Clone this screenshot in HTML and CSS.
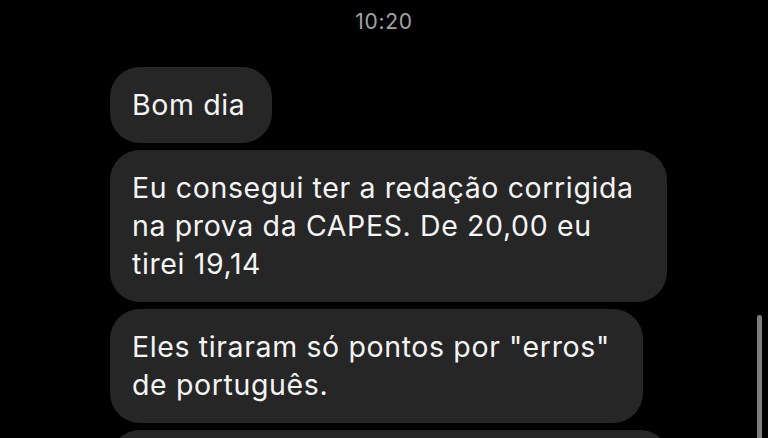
FILE: index.html
```html
<!DOCTYPE html>
<html>

<head>
  <title>Mensagens</title>
  <link rel="stylesheet" href="styles.css">
</head>

<body>
  <div class="chat">
    <div class="hora">10:20</div>
    <div class="lista">
      <div class="balao curto">Bom dia</div>
      <div class="balao">Eu consegui ter a redação corrigida<br>na prova da CAPES. De 20,00 eu<br>tirei 19,14</div>
      <div class="balao">Eles tiraram só pontos por "erros"<br>de português.</div>
      <div class="balao proximo"></div>
    </div>
  </div>
  <div class="scroll"></div>
</body>

</html>
```
FILE: styles.css
```css
* {
  margin: 0;
  padding: 0;
  box-sizing: border-box;
}

body {
  font-family: Inter, "Noto Sans", sans-serif;
  background-color: #000;
  color: #f4f4f4;
  height: 438px;
  overflow: hidden;
}

.chat {
  padding-top: 8px;
}

.hora {
  text-align: center;
  font-size: 21px;
  line-height: 28px;
  letter-spacing: 0.7px;
  color: #a3a3a3;
}

.lista {
  display: flex;
  flex-direction: column;
  align-items: flex-start;
  gap: 7px;
  padding-left: 110px;
  margin-top: 31px;
}

.balao {
  background-color: #262626;
  border-radius: 30px;
  padding: 19px 33px 19px 22px;
  font-size: 28.5px;
  line-height: 38px;
  letter-spacing: 0.62px;
}

.balao.curto {
  padding-right: 27px;
}

.balao.proximo {
  width: 560px;
  height: 80px;
}

/* barra de rolagem */
.scroll {
  position: absolute;
  right: 6px;
  top: 315px;
  width: 5px;
  height: 140px;
  border-radius: 3px;
  background-color: #7d7d7d;
}
```
